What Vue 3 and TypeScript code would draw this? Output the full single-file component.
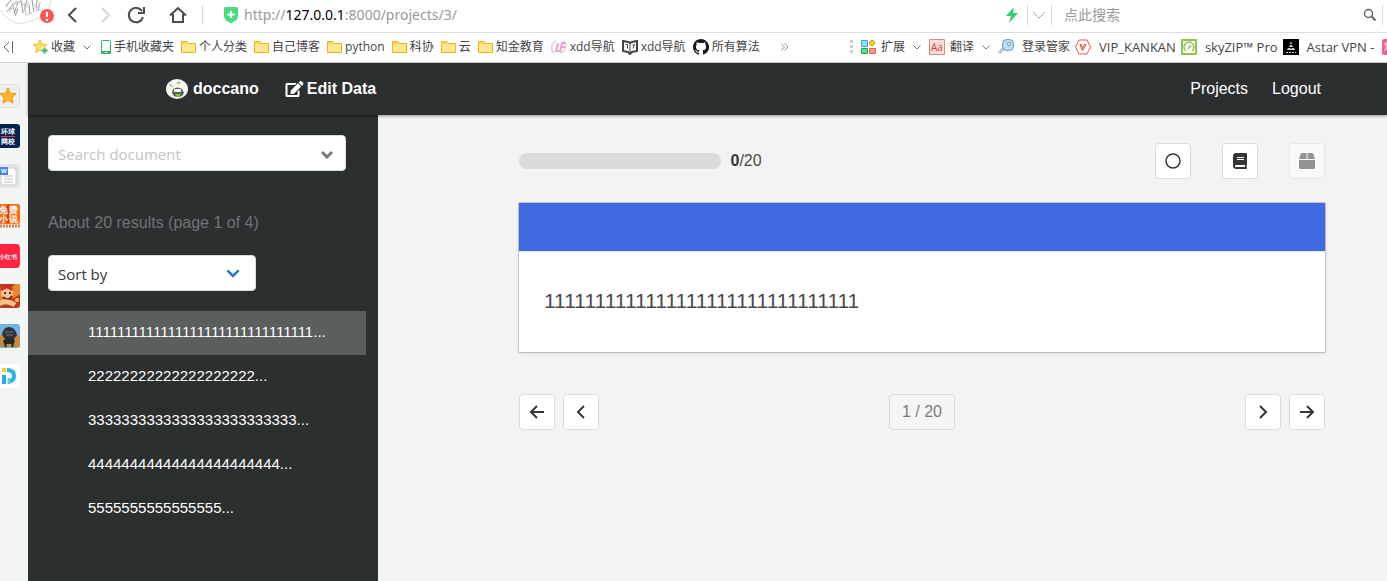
<script setup lang="ts">
import { ref } from 'vue'

interface Bookmark { label: string; icon: string; menu?: boolean }
interface Doc { id: number; text: string }

const bookmarks: Bookmark[] = [
  { label: '收藏', icon: 'fav', menu: true },
  { label: '手机收藏夹', icon: 'phone' },
  { label: '个人分类', icon: 'folder' },
  { label: '自己博客', icon: 'folder' },
  { label: 'python', icon: 'folder' },
  { label: '科协', icon: 'folder' },
  { label: '云', icon: 'folder' },
  { label: '知金教育', icon: 'folder' },
  { label: 'xdd导航', icon: 'lf' },
  { label: 'xdd导航', icon: 'book' },
  { label: '所有算法', icon: 'github' },
]
const extensions: Bookmark[] = [
  { label: '扩展', icon: 'grid', menu: true },
  { label: '翻译', icon: 'aa', menu: true },
  { label: '登录管家', icon: 'key' },
  { label: 'VIP_KANKAN', icon: 'vip' },
  { label: 'skyZIP™ Pro', icon: 'sky' },
  { label: 'Astar VPN -', icon: 'astar' },
]
const shortcuts = ['star', 'school', 'word', 'novel', 'red', 'game', 'battle', 'ip']
const docs: Doc[] = [
  { id: 1, text: '1'.repeat(31) },
  { id: 2, text: '2'.repeat(20) },
  { id: 3, text: '3'.repeat(25) },
  { id: 4, text: '4'.repeat(23) },
  { id: 5, text: '5'.repeat(16) },
]
const current = ref(0)
const query = ref('')
const sort = ref('')
</script>

<template>
  <div class="browser">
    <header class="toolbar">
      <div class="avatar">
        <svg width="56" height="24" viewBox="0 0 56 24" fill="none">
          <path d="M0 10Q8 21 20 24Q37 20 45 15Q50 8 51 0" stroke="#ddd" />
          <path d="M9 9l4-5M14 14l4-12M18 9l-3 7M21 0l2 13M27 0l-3 11M32 0l2 12M37 0l-1 8M40 2l-2 9M6 12l5-4M11 0l-5 7M13 7l2 6M29 5l1 9" stroke="#9a9a9a" />
          <path d="M10 12l5-9M22 13l7-10M34 4l7 7M12 4l9-3M5 5l5-3M24 2l2 12M16 0l1 13M36 12l4-9M25 15l7-2M18 2l7 3" stroke="#c9c9c9" />
          <circle cx="47" cy="16" r="7" fill="#f65a55" />
          <path d="M47 12v5M47 19v2" stroke="#fff" stroke-width="2" />
        </svg>
      </div>
      <button class="tool back" aria-label="Back"><svg width="12" height="16" viewBox="0 0 12 16"><path d="M10 1L3 8l7 7" fill="none" stroke="#4a4a4a" stroke-width="2" /></svg></button>
      <button class="tool next" aria-label="Forward"><svg width="12" height="16" viewBox="0 0 12 16"><path d="M2 1l7 7-7 7" fill="none" stroke="#d6d6d6" stroke-width="2" /></svg></button>
      <button class="tool reload" aria-label="Reload"><svg width="18" height="18" viewBox="0 0 18 18"><path d="M15 5A7.2 7.2 0 1 0 16 11" fill="none" stroke="#4a4a4a" stroke-width="2" /><path d="M17 1v6h-6" fill="none" stroke="#4a4a4a" stroke-width="2" /></svg></button>
      <button class="tool home" aria-label="Home"><svg width="18" height="18" viewBox="0 0 18 18"><path d="M1 9.500L9 2l8 7.500M4 8v8h10V8" fill="none" stroke="#4a4a4a" stroke-width="2" /></svg></button>
      <span class="rule"></span>
      <svg class="shield" width="14" height="16" viewBox="0 0 14 16"><path d="M1 0h12l1 1v8q0 5-7 7-7-2-7-7V1z" fill="#4bdc83" /><path d="M7 4v7M3.500 7.500h7" stroke="#fff" stroke-width="2" /></svg>
      <div class="url" role="textbox" contenteditable="true" spellcheck="false" aria-label="Address">http://<b>127.0.0.1</b>:8000/projects/3/</div>
      <svg class="bolt" width="12" height="16" viewBox="0 0 12 16"><path d="M8 0L0 9h5l-2 7 9-10H7z" fill="#2fcf6b" /></svg>
      <span class="rule"></span>
      <button class="tool engine" aria-label="Search engine"><svg width="14" height="8" viewBox="0 0 14 8"><path d="M1 1l6 6 6-6" fill="none" stroke="#aaa" /></svg></button>
      <span class="rule"></span>
      <input class="web-search" type="text" placeholder="点此搜索" aria-label="点此搜索" />
      <button class="tool find" aria-label="Search"><svg width="13" height="13" viewBox="0 0 13 13"><circle cx="5.500" cy="5.500" r="4" fill="none" stroke="#666" stroke-width="1.500" /><path d="M8.500 8.500l4 4" stroke="#666" stroke-width="2" /></svg></button>
      <span class="rule"></span>
    </header>

    <nav class="bookmarks">
      <button class="tool collapse" aria-label="Collapse"><svg width="12" height="12" viewBox="0 0 12 12"><path d="M6 1L1 6l5 5M9.500 0v12" fill="none" stroke="#666" /></svg></button>
      <ul class="marks">
        <li v-for="(b, i) in bookmarks" :key="i">
          <a href="#" class="mark">
            <svg v-if="b.icon === 'folder'" width="15" height="16" viewBox="0 0 15 16"><path d="M.5 2.500h5.500l1.500 2h7v9H.5z" fill="#ffe68f" stroke="#eab420" /><path d="M1 3h5l1.300 2H1z" fill="#ffd44f" /></svg>
            <svg v-else-if="b.icon === 'fav'" width="15" height="16" viewBox="0 0 15 16"><path d="M7 .8l2 4.400 4.700.5-3.500 3.200 1 4.700L7 11.200l-4.200 2.400 1-4.700L.3 5.700 5 5.200z" fill="#ffdf6d" stroke="#f0b62e" /><path d="M11.500 8v7M8 11.500h7" stroke="#fff" stroke-width="4" /><path d="M11.500 8.500v6M8.500 11.500h6" stroke="#33b967" stroke-width="2" /></svg>
            <svg v-else-if="b.icon === 'phone'" width="10" height="16" viewBox="0 0 10 16"><rect x=".5" y="1.500" width="9" height="13" rx="1" fill="#f5fffa" stroke="#35b36c" /><path d="M0 12h10v3H0z" fill="#35b36c" /><path d="M4 13.500h2" stroke="#fff" /></svg>
            <svg v-else-if="b.icon === 'lf'" width="16" height="16" viewBox="0 0 16 16" fill="none"><path d="M5 2C0 4-1 11 3 14M12 2C17 5 15 12 9 14" stroke="#e6cbe2" stroke-width="1.500" /><path d="M7 4L5 12h3M14.500 4h-3.500L9 13M10 8h4" stroke="#eaa0ca" stroke-width="2" /></svg>
            <svg v-else-if="b.icon === 'book'" width="16" height="16" viewBox="0 0 16 16" fill="none" stroke="#444"><path d="M1 2l5 1 2 1 2-1 5-1v10l-5 1-2 2-2-2-5-1z" stroke-width="2" /><path d="M8 4v10M3.500 5.500h2v4M10.500 6l2-.5-1.500 4" /></svg>
            <svg v-else width="16" height="16" viewBox="0 0 16 16"><path fill="#181818" d="M8 0C3.580 0 0 3.580 0 8c0 3.540 2.290 6.530 5.470 7.590.4.070.55-.17.55-.38v-1.490c-2.010.37-2.530-.49-2.690-.94-.09-.23-.48-.94-.82-1.130-.28-.15-.68-.52-.01-.53.63-.01 1.080.58 1.230.82.72 1.210 1.870.87 2.330.66.07-.52.28-.87.51-1.070-1.780-.2-3.640-.89-3.640-3.950 0-.87.31-1.590.82-2.150-.08-.2-.36-1.020.08-2.120 0 0 .67-.21 2.200.82a7.600 7.600 0 0 1 4 0c1.530-1.040 2.200-.82 2.200-.82.44 1.100.16 1.920.08 2.120.51.56.82 1.270.82 2.150 0 3.070-1.870 3.750-3.650 3.950.29.25.54.73.54 1.480v2.200c0 .21.150.46.550.38A8 8 0 0 0 8 0z" /></svg>
            <span>{{ b.label }}</span>
            <svg v-if="b.menu" class="caret" width="8" height="5" viewBox="0 0 8 5"><path d="M.5.5L4 4 7.500.5" fill="none" stroke="#777" /></svg>
          </a>
        </li>
      </ul>
      <button class="tool more" aria-label="More"><svg width="9" height="8" viewBox="0 0 9 8"><path d="M1 .5L4.500 4 1 7.500M4.500.5L8 4 4.500 7.500" fill="none" stroke="#888" /></svg></button>
      <div class="extensions">
        <svg width="3" height="14" viewBox="0 0 3 14"><path d="M0 0h3v3H0zM0 5h3v3H0zM0 10h3v3H0z" fill="#ccc" /></svg>
        <ul class="exts">
          <li v-for="b in extensions" :key="b.label" :class="b.icon">
            <a href="#" class="mark ext">
              <svg v-if="b.icon === 'grid'" width="15" height="16" viewBox="0 0 15 16"><path d="M.5 1.500h6v6h-6z" fill="#94dafa" stroke="#39a5dd" /><path d="M.5 9.500h6v5h-6z" fill="#57dfa0" stroke="#17a65f" /><path d="M8.500 9.500h6v5h-6z" fill="#ff9c86" stroke="#e6604f" /><path d="M11 1v6M8 4h6" stroke="#d9a400" stroke-width="3" /><path d="M11 2v4M9 4h4" stroke="#ffe65c" /></svg>
              <svg v-else-if="b.icon === 'aa'" width="16" height="16" viewBox="0 0 16 16"><path d="M.5.500h15v15H.5z" fill="#fbdcd9" stroke="#d88a84" /><text x="8" y="12" text-anchor="middle" font-size="10" fill="#c9453d">Aa</text></svg>
              <svg v-else-if="b.icon === 'key'" width="16" height="16" viewBox="0 0 16 16"><path d="M6 9l-5 5" stroke="#aaa" stroke-width="3" /><path d="M6 9l-5 5" stroke="#eee" /><rect x="4.500" y=".5" width="11" height="11" rx="4" fill="#b9dcf3" stroke="#679fc8" /><circle cx="11" cy="5" r="1.500" fill="#fff" stroke="#679fc8" /></svg>
              <svg v-else-if="b.icon === 'vip'" width="16" height="16" viewBox="0 0 16 16" fill="none" stroke="#e3554b"><path d="M4 1h8l3.500 7-3.500 7H4L.5 8z" /><path d="M5 5.500h1.500l1 4 2-4H11L8 11H7z" /></svg>
              <svg v-else-if="b.icon === 'sky'" width="16" height="16" viewBox="0 0 16 16" fill="none" stroke="#8fc34a"><path d="M1 1h14v14H1z" stroke-width="2" /><path d="M5 12a5 5 0 1 1 6 0M7 10l3-4" stroke-width="1.500" /></svg>
              <svg v-else width="16" height="16" viewBox="0 0 16 16"><path d="M0 0h16v16H0z" fill="#000" /><path d="M8 2l1 3H7zM7 6h2l1 2H6zM5 9h2l1 1 1-1h2l1 2H4z" fill="#ccc" /><path d="M3 13.500h10" stroke="#ddd" stroke-dasharray="2 1" /></svg>
              <span>{{ b.label }}</span>
              <svg v-if="b.menu" class="caret" width="8" height="5" viewBox="0 0 8 5"><path d="M.5.5L4 4 7.500.5" fill="none" stroke="#777" /></svg>
            </a>
          </li>
        </ul>
        <svg class="pink" width="16" height="16" viewBox="0 0 16 16"><rect width="16" height="16" rx="2" fill="#f0628f" /><path d="M2 5h4M4 3v8M2 12l4-4" stroke="#ffd9e5" /></svg>
      </div>
    </nav>

    <div class="body">
      <aside class="strip">
        <button v-for="s in shortcuts" :key="s" class="tool" :aria-label="s">
          <svg width="24" height="24" viewBox="0 0 24 24">
            <g v-if="s === 'star'"><rect x=".5" y=".5" width="23" height="23" rx="3" fill="#efefef" stroke="#ddd" /><path d="M12 4l2.400 5.200 5.600.6-4.200 3.800 1.200 5.600-5-2.900-5 2.900 1.200-5.600L4 9.800l5.600-.6z" fill="#ffb62a" stroke="#f09213" /></g>
            <g v-else-if="s === 'school'"><rect width="24" height="24" rx="3" fill="#05224e" /><g fill="#fff" font-size="7" font-weight="700"><text x="5" y="10">环球</text><text x="5" y="20">网校</text></g><path d="M5 12.500h14" stroke="#e43a4c" /></g>
            <g v-else-if="s === 'word'"><rect width="24" height="24" rx="3" fill="#e4e5e5" /><rect x="5" y="4" width="15" height="17" rx="2" fill="#fff" stroke="#ccc" /><path d="M8 12h9M8 15h9M8 18h9" stroke="#bbb" /><path d="M4 3h8v8H4z" fill="#4486ee" /><text x="5" y="9" font-size="6" font-weight="700" fill="#fff">W</text></g>
            <g v-else-if="s === 'novel'"><rect width="24" height="20" rx="2" fill="#ff6b10" /><path d="M12 1v18" stroke="#c93a08" stroke-width="2" /><g fill="#fff" font-size="9" font-weight="700"><text x="3" y="9">免</text><text x="13" y="9">费</text><text x="3" y="18">小</text><text x="13" y="18">说</text></g><path d="M4 22h20" stroke="#ee7843" stroke-width="3" stroke-dasharray="2 1" /></g>
            <g v-else-if="s === 'red'"><rect width="24" height="24" rx="4" fill="#ff2442" /><text x="3" y="15" font-size="6" font-weight="700" fill="#fff">小红书</text></g>
            <g v-else-if="s === 'game'"><rect width="24" height="24" rx="3" fill="#bc3b1c" /><path d="M0 5l10-3 3 4 6-6h5v10l-6 4-18 3z" fill="#e88632" /><circle cx="11" cy="9" r="6" fill="#f6c496" /><path d="M5 6q6-6 11 0" stroke="#cf2d20" stroke-width="3" fill="none" /><path d="M8 9h2M13 9h2M7 13q5 5 9-1" stroke="#76201a" stroke-width="2" fill="none" /><path d="M3 20q7-5 16 1" stroke="#f7bf8b" stroke-width="5" fill="none" /><circle cx="21" cy="16" r="2" fill="#f9c93a" /></g>
            <g v-else-if="s === 'battle'"><rect width="24" height="24" rx="3" fill="#75b3df" /><path d="M0 13l6-2 6 3 6-4 6 2v11H0z" fill="#c98b39" /><path d="M6 11q1-8 7-8t8 8l-3 4H9z" fill="#30343a" /><path d="M10 15h7v4h-7zM8 16l2 7M18 16l-2 7" fill="#24272c" stroke="#24272c" stroke-width="2" /><path d="M9 8h9M10 11h7" stroke="#6b7279" /></g>
            <g v-else><rect width="24" height="24" rx="3" fill="#fff" /><path d="M8 11v9" stroke="#27a9ee" stroke-width="4" /><path d="M6 4h4v4H6z" fill="#ffc72c" /><path d="M11 6q7 0 7 5.500T14 17" stroke="#28b4ee" stroke-width="4" fill="none" /><path d="M13 14v6" stroke="#5cc8f4" stroke-width="3" /></g>
          </svg>
        </button>
      </aside>

      <div class="app">
        <nav class="navbar">
          <a href="#" class="brand">
            <svg width="22" height="20" viewBox="0 0 22 20"><ellipse cx="11" cy="10" rx="11" ry="10" fill="#f4f8f0" /><path d="M3 5q3 0 4 3-4 0-4-3M10 4q3-3 5 0-2 2-5 0" fill="#a4cf80" /><path d="M7 10q5-3 9 0l2 4-2 3q-4 2-8 0l-2-3z" fill="#555f58" /><path d="M8 10h7v3H8z" fill="#f5f8f0" /><path d="M9 15h6l-2 3h-2z" fill="#83c647" /></svg>
            <span>doccano</span>
          </a>
          <a href="#" class="edit">
            <svg width="19" height="16" viewBox="0 0 576 512"><path fill="#fff" d="M402.600 83.200l90.200 90.200c3.800 3.800 3.800 10 0 13.800L274.400 405.600l-92.800 10.300c-12.400 1.400-22.900-9.100-21.500-21.500l10.300-92.800L388.800 83.200c3.800-3.800 10-3.800 13.800 0zm162-22.900l-48.800-48.800c-15.200-15.200-39.900-15.200-55.200 0l-35.400 35.400c-3.800 3.800-3.800 10 0 13.800l90.200 90.200c3.800 3.800 10 3.800 13.800 0l35.400-35.400c15.200-15.300 15.200-40 0-55.200zM384 346.200V448H64V128h229.800c3.200 0 6.200-1.300 8.500-3.500l40-40c7.600-7.600 2.200-20.500-8.500-20.500H48C21.500 64 0 85.500 0 112v352c0 26.500 21.500 48 48 48h352c26.500 0 48-21.500 48-48V306.200c0-10.700-12.900-16-20.500-8.500l-40 40c-2.200 2.300-3.500 5.300-3.500 8.500z" /></svg>
            <span>Edit Data</span>
          </a>
          <a href="#" class="link first">Projects</a>
          <a href="#" class="link">Logout</a>
        </nav>

        <div class="columns">
          <section class="sidebar">
            <div class="field search">
              <input v-model="query" type="text" placeholder="Search document" aria-label="Search document" />
              <svg width="14" height="9" viewBox="0 0 14 9"><path d="M2 2l5 5 5-5" fill="none" stroke="#7a7a7a" stroke-width="3" /></svg>
            </div>
            <p class="results">About 20 results (page 1 of 4)</p>
            <div class="field sort">
              <select v-model="sort" aria-label="Sort by">
                <option value="">Sort by</option>
              </select>
              <svg width="14" height="9" viewBox="0 0 14 9"><path d="M2 2l5 5 5-5" fill="none" stroke="#3273dc" stroke-width="2.500" stroke-linecap="round" /></svg>
            </div>
            <ul class="docs">
              <li v-for="(d, i) in docs" :key="d.id">
                <a href="#" :class="{ active: i === current }" @click.prevent="current = i">{{ d.text }}...</a>
              </li>
            </ul>
          </section>

          <main class="main">
            <div class="status">
              <progress value="0" max="20" aria-label="Progress"></progress>
              <span class="count"><strong>0</strong>/20</span>
              <div class="actions">
                <button class="button" aria-label="Not checked"><svg width="16" height="16" viewBox="0 0 16 16"><circle cx="8" cy="8" r="7" fill="none" stroke="#363636" stroke-width="1.500" /></svg></button>
                <button class="button" aria-label="Guideline"><svg width="14" height="16" viewBox="0 0 448 512"><path fill="#363636" d="M448 360V24c0-13.300-10.700-24-24-24H96C43 0 0 43 0 96v320c0 53 43 96 96 96h328c13.300 0 24-10.700 24-24v-16c0-7.500-3.500-14.300-8.900-18.700-4.200-15.400-4.200-59.300 0-74.700 5.400-4.300 8.900-11.100 8.900-18.600zM128 134c0-3.300 2.700-6 6-6h212c3.300 0 6 2.700 6 6v20c0 3.300-2.700 6-6 6H134c-3.300 0-6-2.700-6-6v-20zm0 64c0-3.300 2.700-6 6-6h212c3.300 0 6 2.700 6 6v20c0 3.300-2.700 6-6 6H134c-3.300 0-6-2.700-6-6v-20zm253.400 250H96c-17.700 0-32-14.300-32-32 0-17.600 14.400-32 32-32h285.400c-1.900 17.100-1.900 46.900 0 64z" /></svg></button>
                <button class="button" disabled aria-label="Metadata"><svg width="16" height="16" viewBox="0 0 512 512"><path fill="#363636" d="M509.500 184.600L458.900 32.800C452.400 13.200 434.100 0 413.400 0H272v192h238.700c-.4-2.500-.4-5-1.200-7.400zM240 0H98.600c-20.700 0-39 13.200-45.500 32.800L2.500 184.600c-.8 2.400-.8 4.900-1.200 7.400H240V0zM0 224v240c0 26.500 21.500 48 48 48h416c26.500 0 48-21.500 48-48V224H0z" /></svg></button>
              </div>
            </div>

            <article class="card">
              <header></header>
              <p>{{ docs[current].text }}</p>
            </article>

            <div class="pager">
              <button class="button" aria-label="First"><svg width="16" height="16" viewBox="0 0 16 16"><path d="M8 2L2 8l6 6M2 8h13" fill="none" stroke="#363636" stroke-width="2" /></svg></button>
              <button class="button" aria-label="Previous"><svg width="16" height="16" viewBox="0 0 16 16"><path d="M11 2L5 8l6 6" fill="none" stroke="#363636" stroke-width="2" /></svg></button>
              <span class="page">{{ current + 1 }} / 20</span>
              <button class="button" aria-label="Next"><svg width="16" height="16" viewBox="0 0 16 16"><path d="M5 2l6 6-6 6" fill="none" stroke="#363636" stroke-width="2" /></svg></button>
              <button class="button" aria-label="Last"><svg width="16" height="16" viewBox="0 0 16 16"><path d="M8 2l6 6-6 6M14 8H1" fill="none" stroke="#363636" stroke-width="2" /></svg></button>
            </div>
          </main>
        </div>
      </div>
    </div>
  </div>
</template>

<style>
body { background: #fff; }
</style>

<style scoped>
* { box-sizing: border-box; }
ul { list-style: none; margin: 0; padding: 0; }
p { margin: 0; }
a { text-decoration: none; }
svg { display: block; flex: none; }
.browser { display: flex; flex-direction: column; min-height: 100vh; overflow: hidden; font-family: "Open Sans", "Noto Sans CJK SC", sans-serif; }
.tool { display: flex; flex: none; padding: 0; border: 0; background: none; }

.toolbar { display: flex; align-items: center; height: 33px; padding-bottom: 3px; border-bottom: 1px solid #dcdcdc; }
.avatar { align-self: flex-start; width: 66px; }
.back { margin-right: 22px; }
.next { margin-right: 15px; }
.reload { margin-right: 24px; }
.home { margin-right: 15px; }
.rule { width: 1px; height: 20px; flex: none; background: #d9d9d9; }
.shield { margin: 0 6px 0 21px; }
.url { flex: 1; color: #999; font-family: "Noto Sans", sans-serif; font-size: 14px; line-height: 20px; outline: 0; white-space: nowrap; }
.url b { color: #000; font-weight: 400; }
.bolt { margin-right: 9px; }
.engine { margin: 0 5px 0 4px; }
.web-search { width: 299px; margin-left: 12px; padding: 0; border: 0; outline: 0; background: none; font-family: inherit; font-size: 14px; line-height: 20px; color: #333; }
.web-search::placeholder { color: #999; opacity: 1; }
.find { margin-right: 6px; }
.toolbar > .rule:last-child { margin-right: 4px; }

.bookmarks { display: flex; align-items: center; height: 30px; padding-bottom: 2px; border-bottom: 1px solid #d4d4d4; font-size: 12px; color: #444; }
.collapse { margin: 0 18px 0 3px; }
.marks { display: flex; gap: 7px; }
.mark { display: flex; align-items: center; gap: 3px; color: #444; line-height: 18px; white-space: nowrap; }
.caret { margin: 2px 3px 0 5px; }
.more { margin-left: 20px; }
.extensions { display: flex; align-items: center; flex: none; width: 537px; margin-left: auto; overflow: hidden; }
.exts { display: flex; gap: 5px; margin: 0 8px; }
.ext { gap: 8px; }
.grid .ext, .aa .ext { gap: 5px; }
.grid .caret, .aa .caret { margin: 2px 3px 0; }
.vip, .sky, .astar { font-size: 13px; }

.body { display: flex; flex: 1; }
.strip { display: flex; flex: none; flex-direction: column; align-items: flex-end; gap: 16px; width: 28px; padding: 21px 8px 0 0; background: #f4f6f5; }
.app { display: flex; flex: 1; flex-direction: column; min-width: 0; background: #f3f3f3; font-family: "Liberation Sans", Arial, sans-serif; font-size: 16px; line-height: 24px; color: #4a4a4a; }
.navbar { position: relative; z-index: 1; display: flex; align-items: center; height: 52px; padding: 0 66px 0 138px; background: #2b2f30; box-shadow: 0 1px 3px rgba(0, 0, 0, .4); }
.navbar a { color: #fff; }
.brand, .edit { display: flex; align-items: center; gap: 5px; font-weight: 700; }
.edit { gap: 3px; margin-left: 26px; }
.link.first { margin: 0 24px 0 auto; }

.columns { display: flex; flex: 1; }
.sidebar { flex: none; width: 350px; padding-top: 20px; background: #2b2f30; }
.field { position: relative; height: 36px; margin-left: 20px; }
.field input, .field select { width: 100%; height: 36px; padding: 2px 9px 0; border: 1px solid #dbdbdb; border-radius: 4px; outline: 0; appearance: none; background: #fff; font-family: "Open Sans", sans-serif; font-size: 15px; color: #363636; }
.field input::placeholder { color: #c4c4c4; opacity: 1; }
.field svg { position: absolute; right: 12px; top: 15px; pointer-events: none; }
.search { width: 298px; }
.sort { width: 208px; }
.sort svg { right: 16px; top: 14px; }
.results { margin: 40px 0 20px 20px; color: #6c7576; line-height: 24px; }
.docs { margin: 20px 12px 0 0; }
.docs a { display: block; height: 44px; padding-left: 60px; color: #fff; font-size: 15px; line-height: 42px; }
.docs a.active { background: #5a5e5f; }

.main { flex: 1; min-width: 0; padding: 28px 62px 0 141px; }
.status { display: flex; align-items: center; }
progress { width: 25%; height: 16px; border: 0; border-radius: 8px; overflow: hidden; appearance: none; background: #dbdbdb; }
progress::-webkit-progress-bar { background: #dbdbdb; }
progress::-webkit-progress-value { background: #00d1b2; }
.count { margin-left: 10px; }
.count strong { color: #363636; }
.actions { display: flex; gap: 31px; margin-left: auto; }
.button { display: flex; align-items: center; justify-content: center; width: 36px; height: 36px; padding: 0; border: 1px solid #dbdbdb; border-radius: 4px; background: #fff; }
.button:disabled { opacity: .5; }
.card { margin-top: 24px; background: #fff; box-shadow: 0 1px 3px rgba(10, 10, 10, .15), 0 0 0 1px rgba(10, 10, 10, .15); }
.card header { height: 48px; background: #4169e1; box-shadow: 0 1px 2px rgba(10, 10, 10, .1); }
.card p { padding: 34px 25px 35px; font-size: 21px; line-height: 32px; overflow-wrap: anywhere; }
.pager { display: flex; gap: 8px; margin-top: 42px; }
.page { height: 36px; margin: 0 auto; padding: 5px 12px; border: 1px solid #dbdbdb; border-radius: 4px; background: #f5f5f5; color: #7a7a7a; }
</style>
